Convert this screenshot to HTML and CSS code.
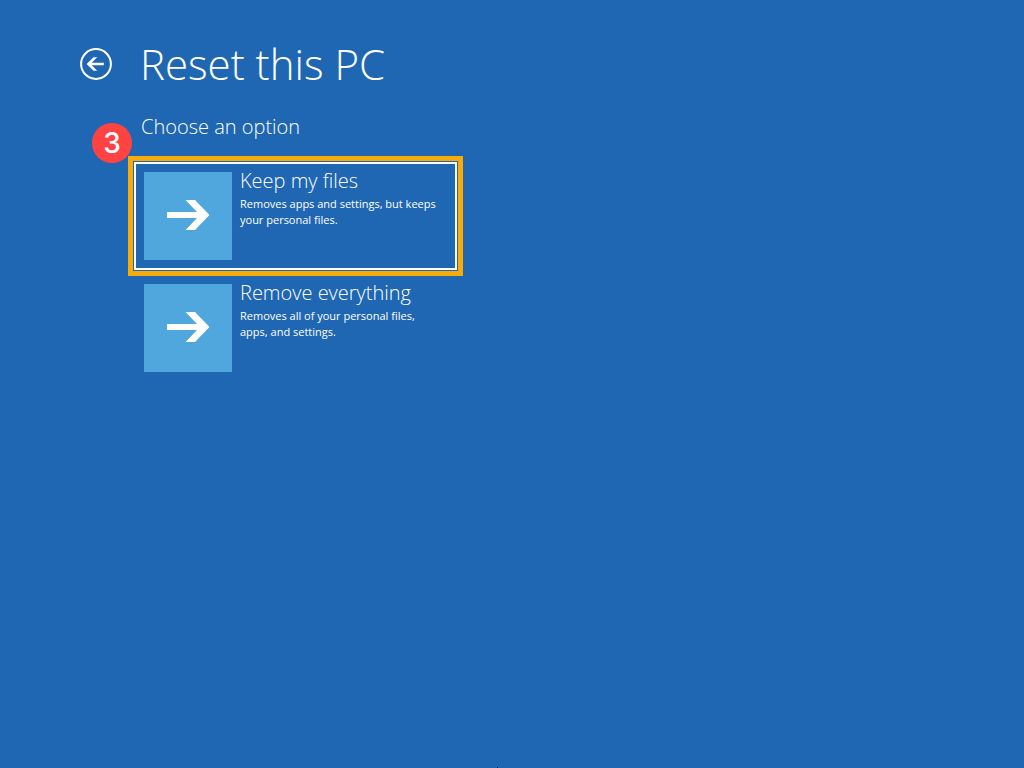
FILE: index.html
```
<!DOCTYPE html>
<html lang="en">
<head>
  <meta charset="UTF-8">
  <meta name="viewport" content="width=device-width, initial-scale=1">
  <title>Reset this PC</title>
  <link rel="stylesheet" href="styles.css">
</head>
<body>

<header class="header">
  <button type="button" class="back" aria-label="Back">
    <svg width="32" height="32" viewBox="0 0 32 32">
      <circle cx="16" cy="16" r="14.9" fill="none" stroke="#fff" stroke-width="2"/>
      <path d="M6.6 16 L13.4 9.2 H17.2 L11.7 14.7 H23.8 V17.3 H11.7 L17.2 22.8 H13.4 Z" fill="#fff"/>
    </svg>
  </button>
  <h1>Reset this PC</h1>
</header>

<main class="content">
  <h2>Choose an option</h2>
  <ul class="options">
    <li>
      <span class="step">3</span>
      <button type="button" class="option now">
        <span class="tile">
          <svg width="88" height="88" viewBox="0 0 88 88">
            <path d="M23 40 H53 L41.5 28 H51 L65.5 43 L51 58 H41.5 L53 46 H23 Z" fill="#fff"/>
          </svg>
        </span>
        <span class="text">
          <span class="name">Keep my files</span>
          <span class="desc">Removes apps and settings, but keeps your personal files.</span>
        </span>
      </button>
    </li>
    <li>
      <button type="button" class="option">
        <span class="tile">
          <svg width="88" height="88" viewBox="0 0 88 88">
            <path d="M23 40 H53 L41.5 28 H51 L65.5 43 L51 58 H41.5 L53 46 H23 Z" fill="#fff"/>
          </svg>
        </span>
        <span class="text">
          <span class="name">Remove everything</span>
          <span class="desc">Removes all of your personal files, apps, and settings.</span>
        </span>
      </button>
    </li>
  </ul>
</main>

<span class="speck"></span>

</body>
</html>
```

FILE: styles.css
```
* {
  margin: 0;
  padding: 0;
  box-sizing: border-box;
  list-style: none;
}

body {
  min-height: 100vh;
  padding: 34px 80px;
  background-color: #1f67b3;
  color: #fff;
  font-family: "Open Sans", "Noto Sans", sans-serif;
}

button {
  border: none;
  background: none;
  color: inherit;
  font-family: inherit;
  text-align: left;
  cursor: pointer;
}

svg {
  display: block;
}

.header {
  display: flex;
  align-items: center;
  gap: 28px;
}

h1 {
  font-size: 42px;
  line-height: 60px;
  font-weight: 300;
}

.content {
  padding: 18px 0 0 54px;
}

h2 {
  padding-left: 7px;
  font-size: 20px;
  line-height: 30px;
  font-weight: 300;
}

.options {
  display: flex;
  flex-direction: column;
  gap: 4px;
  margin-top: 20px;
}

.options li {
  position: relative;
}

.option {
  display: flex;
  gap: 8px;
  width: 100%;
  max-width: 323px;
  padding: 8px;
  border: 2px solid transparent;
}

.option.now {
  border-color: #fff;
  outline: 5px solid #f9ab07;
  outline-offset: 1px;
}

.tile {
  flex: none;
  background-color: #4fa7dd;
}

.text {
  flex: 1;
  padding-right: 6px;
}

.name {
  display: block;
  margin-top: -4px;
  font-size: 20px;
  line-height: 26px;
  font-weight: 300;
}

.desc {
  display: block;
  margin-top: 2px;
  font-size: 11px;
  line-height: 16px;
}

/* step number over the corner of the selected option */
.step {
  position: absolute;
  top: -39px;
  left: -42px;
  width: 40px;
  height: 40px;
  border-radius: 50%;
  background-color: #ff4343;
  font-family: Inter, "Liberation Sans", sans-serif;
  font-size: 28px;
  font-weight: 500;
  line-height: 40px;
  text-align: center;
}

.speck {
  position: fixed;
  bottom: 0;
  left: 497px;
  width: 1px;
  height: 1px;
  background-color: #000;
}
```
